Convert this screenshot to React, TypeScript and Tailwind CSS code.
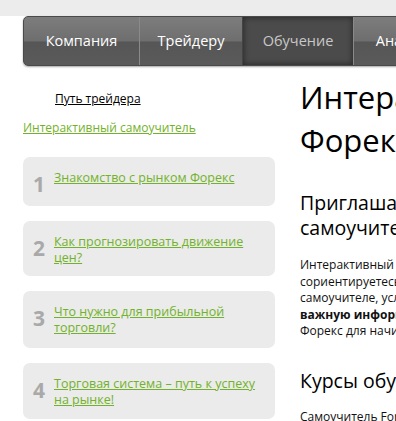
import React from 'react';

const navItems = [
    { label: 'Компания', width: 'w-[115px]', active: false },
    { label: 'Трейдеру', width: 'w-[103px]', active: false },
    { label: 'Обучение', width: 'w-[111px]', active: true },
    { label: 'Аналитика', width: 'w-[120px]', active: false },
    { label: 'Контакты', width: 'w-[110px]', active: false },
];

const lessons = [
    { n: 1, title: 'Знакомство с рынком Форекс', h: 'min-h-[49px]' },
    { n: 2, title: 'Как прогнозировать движение цен?', h: 'min-h-[55px]' },
    { n: 3, title: 'Что нужно для прибыльной торговли?', h: 'min-h-[57px]' },
    { n: 4, title: 'Торговая система – путь к успеху на рынке!', h: 'min-h-[56px]' },
];

export default function App() {
    return (
        <div className="w-full h-[421px] overflow-hidden bg-white font-['Open_Sans',sans-serif]">
            <div className="w-[980px]">
                {/* Top band + nav */}
                <div className="bg-[#ececec] h-[16px]" />
                <div className="pl-[23px]">
                    <nav className="flex h-[50px] rounded-l-[5px] overflow-hidden shadow-[0_1px_2px_rgba(0,0,0,0.35)] bg-[linear-gradient(to_bottom,#7d7d7d_0%,#6e6e6e_50%,#565656_52%,#5a5a5a_100%)] border border-[#4a4a4a]">
                        {navItems.map((item, i) => (
                            <div
                                key={item.label}
                                className={`${item.width} flex items-center justify-center text-[14.5px] ${i > 0 ? 'border-l border-[#8a8a8a]' : ''} ${
                                    item.active
                                        ? 'bg-[#4b4b4b] text-[#c8c8c8] shadow-[inset_0_0_6px_rgba(0,0,0,0.55)] border-l-[#444]'
                                        : 'text-white'
                                }`}
                            >
                                {item.label}
                            </div>
                        ))}
                    </nav>
                </div>

                {/* Content */}
                <div className="flex pl-[23px] pt-[14px]">
                    <aside className="w-[252px] shrink-0">
                        <a href="#" className="block pl-[32px] mt-[11px] text-[12px] leading-[16px] text-black underline">
                            Путь трейдера
                        </a>
                        <a href="#" className="block mt-[13px] text-[12px] leading-[16px] text-[#72b22a] underline">
                            Интерактивный самоучитель
                        </a>
                        <div className="mt-[21px] flex flex-col gap-[15px]">
                            {lessons.map((l) => (
                                <div key={l.n} className={`${l.h} rounded-[7px] bg-[#ebebeb] flex items-start pl-[10px] pr-2 pt-[13px] pb-[10px]`}>
                                    <span className="w-[21px] shrink-0 mt-[3px] text-[21px] leading-[22px] font-bold text-[#a9a9a9]">{l.n}</span>
                                    <a href="#" className="max-w-[208px] text-[12.5px] leading-[16px] text-[#72b22a] underline">
                                        {l.title}
                                    </a>
                                </div>
                            ))}
                        </div>
                    </aside>

                    <main className="ml-[25px] w-[640px]">
                        <h1 className="text-[31px] leading-[43px] text-black mt-[-4.5px]">
                            Интерактивный самоучитель
                            <br />
                            Форекс
                        </h1>
                        <h2 className="mt-[28px] text-[19.5px] leading-[25px] text-black">
                            Приглашаем вас в интерактивный
                            <br />
                            самоучитель Форекс
                        </h2>
                        <p className="mt-[17.75px] text-[12px] leading-[16.5px] text-[#111] w-[500px]">
                            Интерактивный самоучитель поможет вам быстро
                            <br />
                            сориентируетесь в мире валютного рынка. В
                            <br />
                            самоучителе, условно разделенном на уроки, вы найдете
                            <br />
                            <b>важную информацию</b> о торговле на рынке
                            <br />
                            Форекс для начинающих трейдеров.
                        </p>
                        <h2 className="mt-[28px] text-[19.5px] leading-[25px] text-black">
                            Курсы обучения Форекс
                        </h2>
                        <p className="mt-[16px] text-[12px] leading-[16.5px] text-[#111]">
                            Самоучитель Forex — это первый шаг на пути трейдера.
                        </p>
                    </main>
                </div>
            </div>
        </div>
    );
}
